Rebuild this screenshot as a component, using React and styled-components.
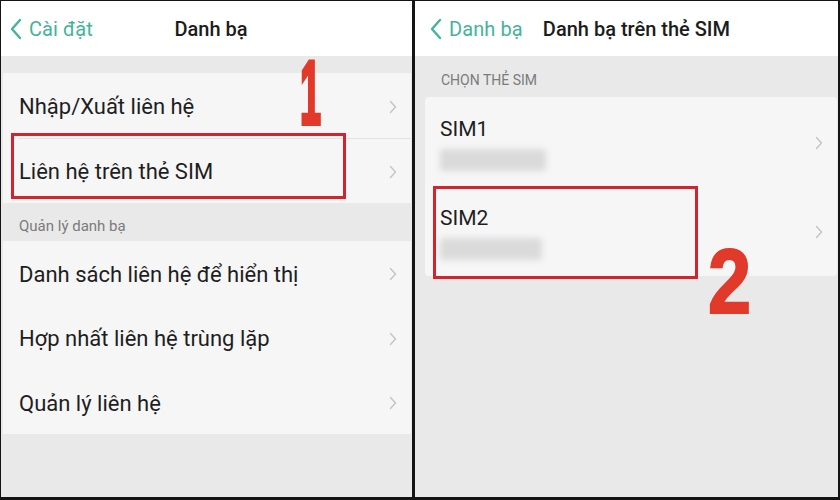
import React from "react";
import styled, { createGlobalStyle } from "styled-components";

const GlobalStyle = createGlobalStyle`
  html, body {
    margin: 0;
    padding: 0;
    background: #111;
  }
  body {
    font-family: Roboto, "Noto Sans", sans-serif;
  }
`;

const Frame = styled.div`
  width: 840px;
  height: 500px;
  box-sizing: border-box;
  border-style: solid;
  border-color: #141414;
  border-width: 1px 2px 3px 1px;
  background: #141414;
  display: grid;
  grid-template-columns: 411px 423px;
  column-gap: 3px;
  overflow: hidden;
`;

const Panel = styled.div`
  position: relative;
  display: flex;
  flex-direction: column;
  background: #e9e9e9;
  overflow: hidden;
`;

const Header = styled.div`
  height: 55px;
  flex: none;
  background: #ffffff;
  display: ${(p) => (p.$centered ? "grid" : "flex")};
  grid-template-columns: 1fr auto 1fr;
  align-items: center;
  padding-left: ${(p) => p.$pl}px;
  gap: ${(p) => (p.$centered ? "0" : "20px")};
`;

const Back = styled.div`
  display: flex;
  align-items: center;
  gap: 7px;
  color: #43b49b;
  font-size: 20px;
  letter-spacing: 0.1px;
`;

const Title = styled.div`
  color: #1c1c1c;
  font-size: 20px;
  font-weight: 500;
`;

const SectionLabel = styled.div`
  height: ${(p) => p.$h}px;
  flex: none;
  box-sizing: border-box;
  display: flex;
  align-items: ${(p) => (p.$bottom ? "flex-end" : "center")};
  padding: ${(p) => (p.$bottom ? "0 0 6px 18px" : "6px 0 0 26px")};
  color: #7b7b7b;
  font-size: ${(p) => p.$size}px;
  text-transform: ${(p) => (p.$upper ? "uppercase" : "none")};
`;

const Card = styled.div`
  background: #f6f6f6;
  margin: ${(p) => p.$margin};
  border-radius: ${(p) => p.$radius || 0}px;
  flex: none;
`;

const Row = styled.div`
  height: ${(p) => p.$h}px;
  box-sizing: border-box;
  display: flex;
  align-items: center;
  justify-content: space-between;
  padding: 2px 14px 0 ${(p) => p.$pl}px;
  position: relative;
  & + &::before {
    content: "";
    position: absolute;
    top: 0;
    left: ${(p) => p.$pl - 1}px;
    right: 0;
    height: 1px;
    background: #e2e2e2;
  }
`;

const RowText = styled.div`
  color: #1e1e1e;
  font-size: 22px;
`;

const SimBlock = styled.div`
  display: flex;
  flex-direction: column;
  gap: 8px;
`;

const SimName = styled.div`
  color: #1e1e1e;
  font-size: 21px;
  margin-top: 2px;
`;

const Blurred = styled.div`
  width: ${(p) => p.$w}px;
  height: 22px;
  background: #dadada;
  border-radius: 4px;
  filter: blur(3px);
`;

const Highlight = styled.div`
  position: absolute;
  box-sizing: border-box;
  border: 3px solid #d2232e;
  left: ${(p) => p.$x}px;
  top: ${(p) => p.$y}px;
  width: ${(p) => p.$w}px;
  height: ${(p) => p.$h}px;
  pointer-events: none;
`;

const StepNumber = styled.div`
  position: absolute;
  left: ${(p) => p.$x}px;
  top: ${(p) => p.$y}px;
  color: #e1392a;
  font-family: "Liberation Sans", Arial, sans-serif;
  font-weight: 700;
  font-size: 90px;
  line-height: 1;
  -webkit-text-stroke: ${(p) => p.$stroke}px #e1392a;
  transform: scaleX(${(p) => p.$scale});
  transform-origin: left top;
`;

const BackChevron = () => (
  <svg width="12" height="22" viewBox="0 0 12 22">
    <polyline
      points="10,2 2,11 10,20"
      fill="none"
      stroke="#43b49b"
      strokeWidth="2.4"
      strokeLinecap="round"
      strokeLinejoin="round"
    />
  </svg>
);

const Chevron = () => (
  <svg width="8" height="14" viewBox="0 0 8 14">
    <polyline
      points="1.5,1.5 6.5,7 1.5,12.5"
      fill="none"
      stroke="#c4c4c4"
      strokeWidth="1.4"
      strokeLinecap="round"
      strokeLinejoin="round"
    />
  </svg>
);

const ListRow = ({ children, h = 65 }) => (
  <Row $h={h} $pl={16}>
    <RowText>{children}</RowText>
    <Chevron />
  </Row>
);

export default function App() {
  return (
    <>
      <GlobalStyle />
      <Frame>
        <Panel>
          <Header $centered $pl={9}>
            <Back>
              <BackChevron />
              Cài đặt
            </Back>
            <Title>Danh bạ</Title>
            <span />
          </Header>
          <SectionLabel $h={17} />
          <Card $margin="0 1px 0 2px">
            <ListRow>Nhập/Xuất liên hệ</ListRow>
            <ListRow>Liên hệ trên thẻ SIM</ListRow>
          </Card>
          <SectionLabel $h={38} $size={15} $bottom>
            Quản lý danh bạ
          </SectionLabel>
          <Card $margin="0 1px 0 2px">
            <ListRow h={64}>Danh sách liên hệ để hiển thị</ListRow>
            <ListRow h={65}>Hợp nhất liên hệ trùng lặp</ListRow>
            <ListRow h={64}>Quản lý liên hệ</ListRow>
          </Card>
          <Highlight $x={10} $y={132} $w={335} $h={66} />
          <StepNumber $x={299} $y={47} $scale={0.42} $stroke={4}>
            1
          </StepNumber>
        </Panel>

        <Panel>
          <Header $pl={15}>
            <Back>
              <BackChevron />
              Danh bạ
            </Back>
            <Title>Danh bạ trên thẻ SIM</Title>
          </Header>
          <SectionLabel $h={41} $size={14} $upper>
            Chọn thẻ SIM
          </SectionLabel>
          <Card $margin="0 1px 0 10px" $radius={4}>
            <Row $h={89} $pl={15}>
              <SimBlock>
                <SimName>SIM1</SimName>
                <Blurred $w={106} />
              </SimBlock>
              <Chevron />
            </Row>
            <Row $h={90} $pl={15}>
              <SimBlock>
                <SimName>SIM2</SimName>
                <Blurred $w={102} />
              </SimBlock>
              <Chevron />
            </Row>
          </Card>
          <Highlight $x={18} $y={185} $w={265} $h={93} />
          <StepNumber $x={293} $y={236} $scale={0.86} $stroke={2}>
            2
          </StepNumber>
        </Panel>
      </Frame>
    </>
  );
}
